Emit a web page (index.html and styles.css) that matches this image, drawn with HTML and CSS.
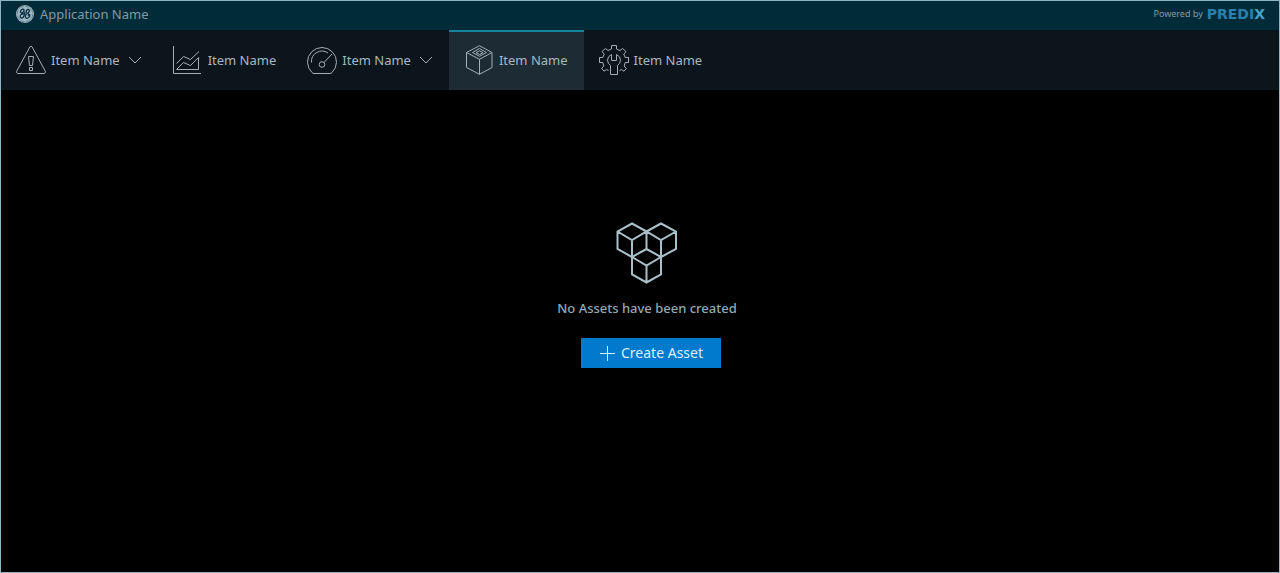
FILE: index.html
```html
<!DOCTYPE html>
<html lang="en">
<head>
<meta charset="utf-8">
<meta name="viewport" content="width=device-width, initial-scale=1">
<title>Application Name</title>
<link rel="stylesheet" href="styles.css">
</head>
<body>
<div class="app">
  <header class="topbar">
    <div class="brand">
      <svg class="brand-logo" viewBox="0 0 18 18" aria-hidden="true">
        <circle cx="9" cy="9" r="9" fill="#9db5c0"/>
        <circle cx="9" cy="9" r="7.8" fill="none" stroke="#3d6070" stroke-width=".6" stroke-dasharray="4.500 1.600"/>
        <g fill="none" stroke="#0a2e3f" stroke-width="1.300" stroke-linecap="round">
          <path d="M5 7.800C3.700 6.500 5.400 4 7.200 4.200 8.800 4.600 7.800 7.300 6 8.200M7.800 8.800C5.500 8.500 3.800 10.200 4.300 12 5 13.800 7.400 13 8 10.800L8.800 7.500"/>
          <path d="M10.200 7.300C9.800 5.500 11.500 3.900 12.900 4.600 14 5.500 13 7.800 11 8.600 9.300 9.400 8.800 11.700 10 13 11.800 14 13.900 12 13.800 10 13.600 9 12.600 9.300 12.300 10.300"/>
        </g>
      </svg>
      <span>Application Name</span>
    </div>
    <div class="powered"><span>Powered by</span><span class="wordmark">PREDI<span class="wordmark-x">X</span></span></div>
  </header>

  <nav class="nav" aria-label="Main">
    <button class="nav-item" type="button" aria-haspopup="true">
      <svg class="icon" viewBox="0 0 30 30" aria-hidden="true">
        <path d="M13.900 1.900Q15 .2 16.100 1.900L29.300 26.200Q29.900 28 28.200 28.500H1.800Q.1 28 .7 26.200Z"/>
        <path d="M12.500 11.500H17.500L16.500 20.500H13.500ZM13.500 22.500H16.500V25.500H13.500Z"/>
      </svg>
      <span>Item Name</span>
      <svg class="chevron" viewBox="0 0 14 8" aria-hidden="true"><path d="M1 1L7 7 13 1"/></svg>
    </button>
    <button class="nav-item" type="button">
      <svg class="icon" viewBox="0 0 30 30" aria-hidden="true">
        <path d="M.5 1V28.500H28M3.500 18.500L10.500 11.500 17.500 14.500 26 6.500M3.500 24.500L10.500 17.500 17.500 20.500 25.500 12.500V24.500Z"/>
      </svg>
      <span>Item Name</span>
    </button>
    <button class="nav-item" type="button" aria-haspopup="true">
      <svg class="icon" viewBox="0 0 30 30" aria-hidden="true">
        <path d="M5 27.500A14.500 14.500 0 1 1 25 27.500Q24.300 28.500 23 28.500H7Q5.700 28.500 5 27.500Z"/>
        <path d="M4.500 17.500A10.500 10.500 0 0 1 21 8M17 17.500L25 9"/>
        <circle cx="15" cy="19.500" r="2.800"/>
      </svg>
      <span>Item Name</span>
      <svg class="chevron" viewBox="0 0 14 8" aria-hidden="true"><path d="M1 1L7 7 13 1"/></svg>
    </button>
    <button class="nav-item nav-item-active" type="button" aria-current="page">
      <svg class="icon" viewBox="0 0 30 30" aria-hidden="true">
        <path d="M15.500 .7L28 7.500V22.500L15.500 29.300 2.500 22.500V7.500ZM2.500 7.500L15.500 14.300 28 7.500M15.500 14.300V29.300"/>
        <path d="M15.500 3.500L22.500 7.500 15.500 11.300 8.500 7.500ZM15.500 5.800L19 7.700 15.500 9.500 12 7.700Z"/>
      </svg>
      <span>Item Name</span>
    </button>
    <button class="nav-item" type="button">
      <svg class="icon" viewBox="0 0 30 30" aria-hidden="true">
        <path d="M9.500 25.500L7.500 24.500 5 26.200 2.700 23.500 4.800 21 3.800 17.500H.5V12.500H3.800L5.200 9.200 3 6.500 6.500 3.500 9 5.500 12.500 4V.5H17.500V4L21 5.500 23.500 3.500 27 6.500 24.800 9.200 26.200 12.500H29.500V17.500H26.200L25.200 21 27.300 23.500 25 26.200 22.500 24.500 20.500 25.500"/>
        <path d="M12.500 9.500V15.500H17.500V9.500Q21.500 11.300 21.500 15.200 21.300 18.600 18.500 20.500V29.500H11.500V20.500Q8.700 18.600 8.500 15.200 8.500 11.300 12.500 9.500Z"/>
      </svg>
      <span>Item Name</span>
    </button>
  </nav>

  <main class="content">
    <div class="empty">
      <svg class="empty-icon" viewBox="0 0 62 62" aria-hidden="true">
        <path d="M16 1.500L30.500 9.500 45 1.500 60 9.500V27L45 35V52.500L30.500 60.500 16 52.500V35L1.500 27V9.500ZM1.500 9.500L16 18 30.500 9.500 45 18 60 9.500M16 18V35L30.500 27 45 35V18M30.500 9.500V27M16 35L30.500 43.500 45 35M30.500 43.500V60.500"/>
      </svg>
      <p class="empty-text">No Assets have been created</p>
    </div>
    <button class="create" type="button">
      <svg class="plus" viewBox="0 0 16 16" aria-hidden="true"><path d="M8.500 1V16M1 8.500H16"/></svg>
      <span>Create Asset</span>
    </button>
  </main>
</div>
</body>
</html>
```

FILE: styles.css
```css
* {
  box-sizing: border-box;
}

body {
  margin: 0;
  background: #000;
  font-family: "Noto Sans", sans-serif;
  font-size: 13px;
  line-height: 20px;
}

button {
  border: 0;
  background: none;
  font: inherit;
  cursor: pointer;
}

svg {
  flex: none;
}

.app {
  display: flex;
  flex-direction: column;
  min-height: 100vh;
  border: 1px solid #8db5c4;
}

.topbar {
  display: flex;
  align-items: center;
  justify-content: space-between;
  height: 29px;
  padding: 0 14px 4px 15px;
  background: #022b3a;
  color: #8299a6;
}

.brand {
  display: flex;
  align-items: center;
  gap: 6px;
}

.brand-logo {
  width: 18px;
  height: 18px;
}

.powered {
  display: flex;
  align-items: center;
  gap: 4px;
  font-size: 9px;
}

.wordmark {
  color: #2980ad;
  font-family: "DejaVu Sans", sans-serif;
  font-size: 14px;
  font-weight: bold;
}

.wordmark-x {
  color: #45a5c9;
}

.nav {
  display: flex;
  height: 60px;
  background: #0b151b;
}

.nav-item {
  display: flex;
  align-items: center;
  gap: 5px;
  padding: 0 16px 0 15px;
  border-top: 2px solid transparent;
  border-bottom: 2px solid transparent;
  color: #a8b7c0;
}

.nav-item-active {
  border-top-color: #16839a;
  border-bottom-color: #1d2b34;
  background: #1d2b34;
}

.icon,
.chevron {
  fill: none;
  stroke: #a3b0b8;
  stroke-width: 1;
}

.icon {
  width: 30px;
  height: 30px;
}

.chevron {
  width: 14px;
  height: 8px;
  margin-left: 3px;
}

.content {
  flex: 1;
  display: flex;
  flex-direction: column;
  align-items: center;
  gap: 20px;
  padding: 132px 0 20px 22px;
}

.empty {
  display: flex;
  flex-direction: column;
  align-items: center;
  gap: 14px;
  padding-right: 8px;
}

.empty-icon {
  width: 62px;
  height: 62px;
  fill: none;
  stroke: #a9c0cb;
  stroke-width: 2;
}

.empty-text {
  margin: 0;
  color: #93a8b3;
  font-weight: 500;
}

.create {
  display: flex;
  align-items: center;
  gap: 6px;
  height: 30px;
  padding: 0 18px;
  background: #007acc;
  color: #d9f0fc;
  font-size: 14px;
}

.plus {
  width: 16px;
  height: 16px;
  fill: none;
  stroke: #d9f0fc;
  stroke-width: 1;
}
```
